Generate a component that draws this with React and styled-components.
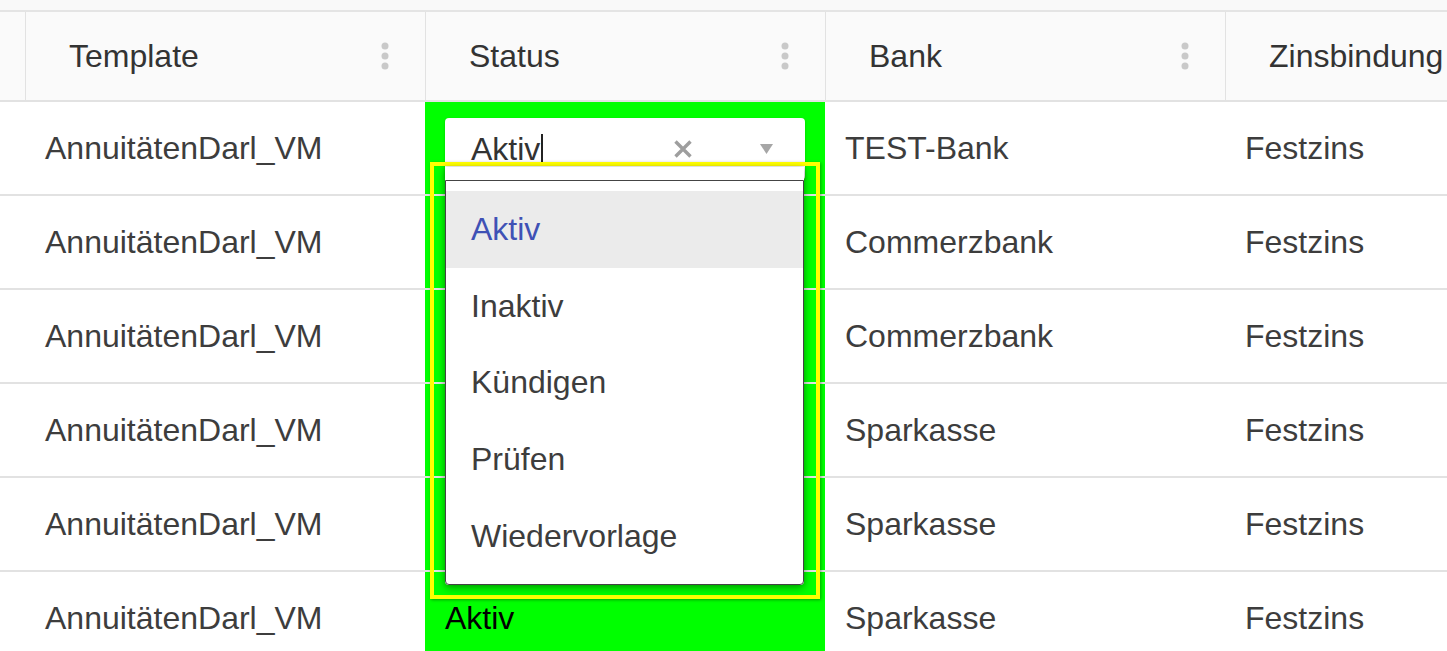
import React from 'react';
import styled, { createGlobalStyle } from 'styled-components';

const GlobalStyle = createGlobalStyle`
  html, body {
    margin: 0;
    padding: 0;
    background: #fff;
    overflow: hidden;
  }
  body {
    font-family: "Liberation Sans", Arial, sans-serif;
  }
`;

const columns = [
  { key: 'pad', title: '', width: 25 },
  { key: 'template', title: 'Template', width: 400 },
  { key: 'status', title: 'Status', width: 400 },
  { key: 'bank', title: 'Bank', width: 400 },
  { key: 'zins', title: 'Zinsbindung', width: 400 },
];

const rows = [
  { template: 'AnnuitätenDarl_VM', status: 'Aktiv', bank: 'TEST-Bank', zins: 'Festzins' },
  { template: 'AnnuitätenDarl_VM', status: 'Aktiv', bank: 'Commerzbank', zins: 'Festzins' },
  { template: 'AnnuitätenDarl_VM', status: 'Aktiv', bank: 'Commerzbank', zins: 'Festzins' },
  { template: 'AnnuitätenDarl_VM', status: 'Aktiv', bank: 'Sparkasse', zins: 'Festzins' },
  { template: 'AnnuitätenDarl_VM', status: 'Aktiv', bank: 'Sparkasse', zins: 'Festzins' },
  { template: 'AnnuitätenDarl_VM', status: 'Aktiv', bank: 'Sparkasse', zins: 'Festzins' },
];

const options = ['Aktiv', 'Inaktiv', 'Kündigen', 'Prüfen', 'Wiedervorlage'];

const gridTemplate = columns.map((c) => `${c.width}px`).join(' ');

const Grid = styled.div`
  width: 1447px;
  height: 651px;
  overflow: hidden;
`;

const TopStrip = styled.div`
  height: 10px;
  background: #f9f9f9;
  border-bottom: 2px solid #e4e4e4;
`;

const HeaderRow = styled.div`
  display: grid;
  grid-template-columns: ${gridTemplate};
  height: 88px;
  background: #fafafa;
  border-bottom: 2px solid #e2e2e2;
`;

const HeaderCell = styled.div`
  display: flex;
  align-items: center;
  justify-content: space-between;
  padding: 0 36px 0 43px;
  border-left: ${(p) => (p.$first ? 'none' : '1px solid #e2e2e2')};
  font-size: 32px;
  color: #333;
  white-space: nowrap;
`;

const Dots = styled.svg`
  flex: none;
  width: 8px;
  height: 28px;
`;

const BodyRow = styled.div`
  display: grid;
  grid-template-columns: ${gridTemplate};
  height: 94px;
`;

const Cell = styled.div`
  position: relative;
  display: flex;
  align-items: center;
  padding: 0 20px;
  border-bottom: 2px solid #e2e2e2;
  font-size: 32px;
  color: ${(p) => (p.$status ? '#000' : '#3d3d3d')};
  background: ${(p) => (p.$status ? '#00ff00' : 'transparent')};
  white-space: nowrap;
`;

const EditorCell = styled(Cell)`
  align-items: flex-start;
  padding: 16px 20px 0;
`;

const Input = styled.div`
  display: flex;
  align-items: center;
  width: 100%;
  height: 62px;
  padding: 0 32px 0 26px;
  box-sizing: border-box;
  background: #fff;
  border-radius: 4px;
  box-shadow: 0 1px 3px rgba(0, 0, 0, 0.2);
  color: #333;
`;

const InputText = styled.div`
  flex: 1;
  display: flex;
  align-items: center;
`;

const Caret = styled.span`
  display: inline-block;
  width: 2px;
  height: 31px;
  background: #222;
  margin-left: 1px;
`;

const ClearIcon = styled.svg`
  width: 20px;
  height: 20px;
  margin-right: 67px;
`;

const Arrow = styled.svg`
  width: 13px;
  height: 10px;
`;

const Popup = styled.div`
  position: absolute;
  left: 5px;
  top: 60px;
  width: 390px;
  height: 437px;
  box-sizing: border-box;
  border: 4px solid #ffff00;
  padding: 1px 12px 0 11px;
  box-shadow: 1px 1px 3px rgba(0, 0, 0, 0.35);
  z-index: 2;
`;

const Paper = styled.div`
  background: #fff;
  padding-top: 13px;
  border-radius: 0 0 4px 4px;
  box-shadow: 0 3px 9px rgba(0, 0, 0, 0.35), 0 0 4px rgba(0, 0, 0, 0.15);
`;

const List = styled.ul`
  list-style: none;
  margin: 0;
  padding: 10px 0 9px;
  border: 1px solid #444;
  border-radius: 0 0 4px 4px;
`;

const Option = styled.li`
  display: flex;
  align-items: center;
  height: 76.75px;
  padding-left: 25px;
  font-size: 32px;
  color: ${(p) => (p.$active ? '#3f51b5' : '#3d3d3d')};
  background: ${(p) => (p.$active ? '#ebebeb' : 'transparent')};
`;

const MenuDots = () => (
  <Dots viewBox="0 0 8 28">
    <circle cx="4" cy="4" r="3.5" fill="#c9c9c9" />
    <circle cx="4" cy="14" r="3.5" fill="#c9c9c9" />
    <circle cx="4" cy="24" r="3.5" fill="#c9c9c9" />
  </Dots>
);

const StatusEditor = ({ value }) => (
  <EditorCell $status>
    <Input>
      <InputText>
        {value}
        <Caret />
      </InputText>
      <ClearIcon viewBox="0 0 20 20">
        <path d="M2.5 2.5 L17.5 17.5 M17.5 2.5 L2.5 17.5" stroke="#9e9e9e" strokeWidth="3.4" />
      </ClearIcon>
      <Arrow viewBox="0 0 13 10">
        <polygon points="0,0 13,0 6.5,10" fill="#a6a6a6" />
      </Arrow>
    </Input>
    <Popup>
      <Paper>
        <List>
          {options.map((o) => (
            <Option key={o} $active={o === value}>
              {o}
            </Option>
          ))}
        </List>
      </Paper>
    </Popup>
  </EditorCell>
);

const App = () => {
  return (
    <>
      <GlobalStyle />
      <Grid>
        <TopStrip />
        <HeaderRow>
          {columns.map((c, i) => (
            <HeaderCell key={c.key} $first={i === 0}>
              {c.title && (
                <>
                  <span>{c.title}</span>
                  <MenuDots />
                </>
              )}
            </HeaderCell>
          ))}
        </HeaderRow>
        {rows.map((r, i) => (
          <BodyRow key={i}>
            <Cell />
            <Cell>{r.template}</Cell>
            {i === 0 ? (
              <StatusEditor value={r.status} />
            ) : (
              <Cell $status>{i < 5 ? '' : r.status}</Cell>
            )}
            <Cell>{r.bank}</Cell>
            <Cell>{r.zins}</Cell>
          </BodyRow>
        ))}
      </Grid>
    </>
  );
};

export default App;
